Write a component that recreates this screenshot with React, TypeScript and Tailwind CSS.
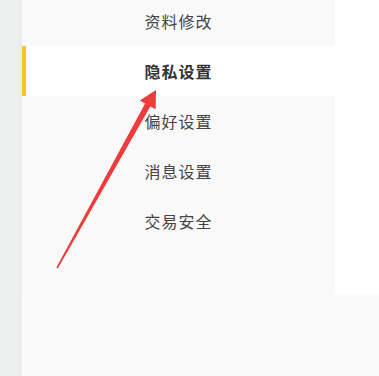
import React from "react";

const items = ["资料修改", "隐私设置", "偏好设置", "消息设置", "交易安全"];
const activeIndex = 1;

function Arrow() {
  return (
    <svg
      className="pointer-events-none absolute left-0 top-0"
      width="379"
      height="376"
      viewBox="0 0 379 376"
    >
      <polygon
        points="156,90 155.6,109.3 150.3,106.4 57.8,268.4 56.4,267.6 145.1,103.4 139.8,100.5"
        fill="#ee3b3b"
      />
    </svg>
  );
}

export default function App() {
  return (
    <div
      className="relative flex h-[376px] w-[379px] overflow-hidden bg-[#fafafa]"
      style={{ fontFamily: '"Noto Sans CJK SC", "Noto Sans", sans-serif' }}
    >
      <div className="h-full w-[22px] shrink-0 border-r-4 border-[#ebecec] bg-[#eef0ef]" />
      <div className="flex flex-1 flex-col">
        <div className="flex h-[294px]">
          <nav className="flex w-[313px] shrink-0 flex-col bg-[#f9f9f9] -mt-[4px]">
            {items.map((label, i) => (
              <div
                key={label}
                className={
                  i === activeIndex
                    ? "relative flex h-[50px] items-center justify-center bg-white text-[16px] font-bold text-[#333]"
                    : "flex h-[50px] items-center justify-center text-[16px] text-[#444]"
                }
              >
                {i === activeIndex && (
                  <span className="absolute left-0 top-0 h-full w-[4px] bg-[#f5c726]" />
                )}
                <span className="tracking-[1px]">{label}</span>
              </div>
            ))}
          </nav>
          <div className="flex-1 bg-white" />
        </div>
        <div className="flex-1" />
      </div>
      <Arrow />
    </div>
  );
}
